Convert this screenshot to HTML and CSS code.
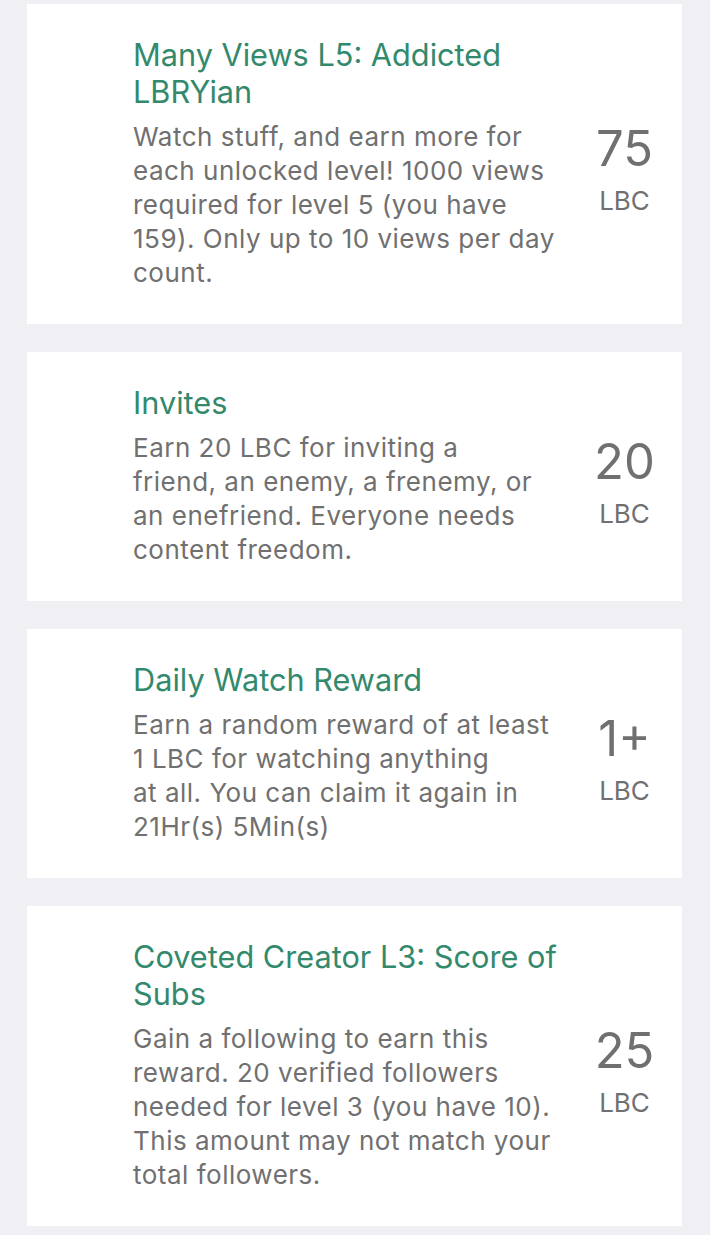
FILE: index.html
```html
<!DOCTYPE html>
<html lang="en">
<head>
    <meta charset="UTF-8">
    <meta name="viewport" content="width=device-width, initial-scale=1.0">
    <title>Rewards</title>
    <link rel="stylesheet" href="styles.css">
</head>
<body>
    <div class="reward-list">
        <div class="reward-card">
            <div class="reward-info">
                <h2 class="reward-title">Many Views L5: Addicted<br>LBRYian</h2>
                <p class="reward-desc">Watch stuff, and earn more for<br>each unlocked level! 1000 views<br>required for level 5 (you have<br>159). Only up to 10 views per day<br>count.</p>
            </div>
            <div class="reward-amount">
                <span class="amount">75</span>
                <span class="currency">LBC</span>
            </div>
        </div>

        <div class="reward-card">
            <div class="reward-info">
                <h2 class="reward-title">Invites</h2>
                <p class="reward-desc">Earn 20 LBC for inviting a<br>friend, an enemy, a frenemy, or<br>an enefriend. Everyone needs<br>content freedom.</p>
            </div>
            <div class="reward-amount">
                <span class="amount">20</span>
                <span class="currency">LBC</span>
            </div>
        </div>

        <div class="reward-card">
            <div class="reward-info">
                <h2 class="reward-title">Daily Watch Reward</h2>
                <p class="reward-desc">Earn a random reward of at least<br>1 LBC for watching anything<br>at all. You can claim it again in<br>21Hr(s) 5Min(s)</p>
            </div>
            <div class="reward-amount">
                <span class="amount">1+</span>
                <span class="currency">LBC</span>
            </div>
        </div>

        <div class="reward-card">
            <div class="reward-info">
                <h2 class="reward-title">Coveted Creator L3: Score of<br>Subs</h2>
                <p class="reward-desc">Gain a following to earn this<br>reward. 20 verified followers<br>needed for level 3 (you have 10).<br>This amount may not match your<br>total followers.</p>
            </div>
            <div class="reward-amount">
                <span class="amount">25</span>
                <span class="currency">LBC</span>
            </div>
        </div>
    </div>
</body>
</html>
```

FILE: styles.css
```css
:root {
    --page-background: #efeff4;
    --card-background: #ffffff;
    --title-color: #33896c;
    --text-color: #707070;
    --amount-color: #707070;
}

body {
    margin: 0;
    background-color: var(--page-background);
    font-family: Inter, 'Noto Sans', sans-serif;
}

.reward-list {
    display: flex;
    flex-direction: column;
    gap: 28px;
    padding: 4px 28px 8px 27px;
}

.reward-card {
    display: flex;
    align-items: center;
    background-color: var(--card-background);
    padding: 32px 0 34px 106px;
}

.reward-info {
    width: 440px;
    white-space: nowrap;
}

.reward-title {
    margin: 0 0 10px;
    color: var(--title-color);
    font-size: 30.7px;
    font-weight: 400;
    line-height: 37px;
}

.reward-desc {
    margin: 0;
    color: var(--text-color);
    font-size: 26px;
    letter-spacing: 0.5px;
    line-height: 34px;
}

.reward-amount {
    flex: 1;
    display: flex;
    flex-direction: column;
    align-items: center;
    color: var(--amount-color);
    padding: 13px 6px 0 0;
}

.amount {
    font-size: 49px;
    line-height: 56px;
}

.currency {
    font-size: 26px;
    line-height: 34px;
    margin-top: 7px;
}
```
